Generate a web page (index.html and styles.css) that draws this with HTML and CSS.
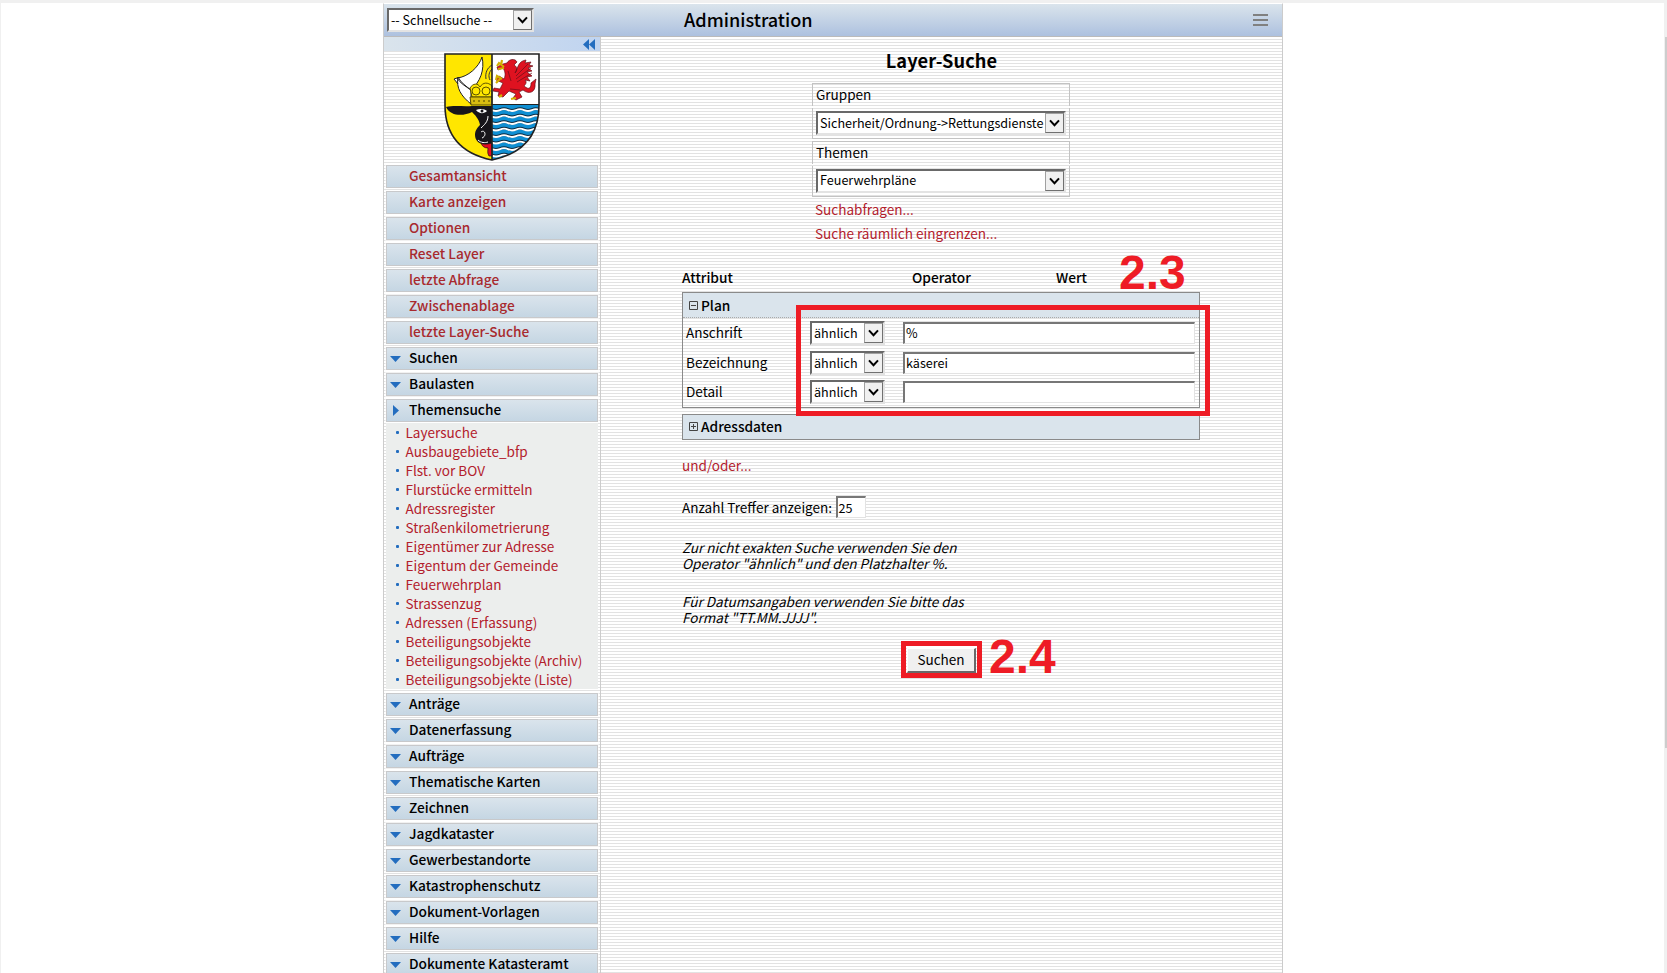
FILE: index.html
```html
<!DOCTYPE html>
<html lang="de">
<head>
<meta charset="utf-8">
<title>Administration</title>
<link rel="stylesheet" href="styles.css">
</head>
<body>
<div class="app">
  <header class="top">
    <div class="select quick"><span>-- Schnellsuche --</span><i><svg viewBox="0 0 18 20"><path d="M4 7 9 12.500 14 7"/></svg></i></div>
    <h1>Administration</h1>
    <div class="burger"><b></b><b></b><b></b></div>
  </header>
  <div class="cols">
    <aside class="side">
      <div class="strip"><svg viewBox="0 0 12 11"><path d="M6 0v11L0 5.500zM12 0v11L6 5.500z"/></svg></div>
      <svg class="crest" viewBox="0 0 96 108">
        <defs><clipPath id="shield"><path d="M1 1H95V52C95 84 77 101 48 107 19 101 1 84 1 52Z"/></clipPath></defs>
        <g clip-path="url(#shield)">
          <path fill="#ffe600" d="M0 0h48v108H0z"/>
          <path fill="#fff" d="M48 0h48v51H48z"/>
          <path fill="#0f8fd3" d="M48 51h48v57H48z"/>
          <path stroke="#222" d="M48 51.500h48"/>
          <g fill="none" stroke="#0b2a40" stroke-width="2.600">
            <path id="w" d="M48 56.500q4 1.800 8 0 4-1.800 8 0 4 1.800 8 0 4-1.800 8 0 4 1.800 8 0 4-1.800 8 0"/>
            <use href="#w" y="6.500"/><use href="#w" y="13"/><use href="#w" y="19.500"/><use href="#w" y="26"/><use href="#w" y="32.500"/><use href="#w" y="39"/><use href="#w" y="45.500"/>
          </g>
          <g fill="none" stroke="#fff" stroke-width="1.800">
            <path id="v" d="M48 57.100q4 1.800 8 0 4-1.800 8 0 4 1.800 8 0 4-1.800 8 0 4 1.800 8 0 4-1.800 8 0"/>
            <use href="#v" y="6.500"/><use href="#v" y="13"/><use href="#v" y="19.500"/><use href="#v" y="26"/><use href="#v" y="32.500"/><use href="#v" y="39"/><use href="#v" y="45.500"/>
          </g>
          <path fill="#fff" stroke="#222" d="M27 51C17 43 12 35 14 24c3 6 8 9 13 13v14zM13 25C24 24 35 14 38 4c3 13-2 25-11 33-6-4-11-7-14-12zM13 25l-3 1 4 5"/>
          <path fill="none" stroke="#333" d="M48 12c-5 3-7 8-6 14M48 16c-3 3-4 7-2 11"/>
          <path fill="#ffe600" stroke="#4a4100" stroke-width=".9" d="M28 44l-2-9c3-5 8-5 10-1 3-5 8-5 12-1v11z"/>
          <g fill="none" stroke="#4a4100" stroke-width=".9"><circle cx="32" cy="38" r="4"/><circle cx="42" cy="38" r="4"/></g>
          <path fill="#d9bd10" stroke="#4a4100" stroke-width=".9" d="M26 44h22v8H27z"/>
          <path stroke="#4a4100" stroke-dasharray="2 3" d="M29 48h18"/>
          <path fill="#17151a" d="M2 54c9-2 17 0 26-1h20v51l-4-13c-6 2-13-2-13-9 0-5 3-8 5-10-1-6-5-10-8-13-8 4-21 5-26-5z"/>
          <path fill="#fff" d="M32 57c4-2 9-1 11 1-3 3-8 3-11-1z"/><circle cx="38" cy="58" r="1.500" fill="#17151a"/>
          <path fill="none" stroke="#fff" d="M44 63c0 6-4 9-7 12M37 79c4-3 6 4 1 6M34 87c3 3 7 3 10 2"/>
          <path fill="#e30b22" stroke="#17151a" stroke-width=".7" d="M37 90c4 2 7 1 11 0v13h-3c-2-3-1-6-1-8-4 0-6-2-7-5z"/>
          <path fill="#df1220" stroke="#65101a" stroke-width=".7" d="M63 10c2-4 8-5 10-1l-3 3c4 2 3 6 1 8 3-5 3-12 11-13l-1 3 6-1-2 3 4 1-5 2 4 3-5 1 5 4-5 1 3 4-5-1c2 2 1 4-1 6 6 5 7 1 7-3l5-4-1 5c1 8-6 11-12 6l-4 2 3 5-6 3-3-2 3-4-7-3-6 6-5-1 1-4-6-1 1-3 6 1 3-6-7-3 3-4 5 3c2-4 1-8-1-11l-5 2-1-3 6-3z"/>
          <g fill="none" stroke="#d2b000" stroke-width="2.200"><path d="M60 14l-5-4-2 3m4-1 1-5M60 15l-6 1M58 26l-5-3-1 4m4-1-4 4M58 42l-3 2M72 45l-5 1"/></g>
          <path fill="none" stroke="#651018" stroke-width=".7" d="M72 23l12-12M72 26l15-11M73 29l15-9M64 18l3 10M66 36l10 1"/>
        </g>
        <path fill="none" stroke="#222" stroke-width="1.600" d="M1 1H95V52C95 84 77 101 48 107 19 101 1 84 1 52ZM48 1V107"/>
      </svg>
      <nav class="menu">
        <a class="item link">Gesamtansicht</a>
        <a class="item link">Karte anzeigen</a>
        <a class="item link">Optionen</a>
        <a class="item link">Reset Layer</a>
        <a class="item link">letzte Abfrage</a>
        <a class="item link">Zwischenablage</a>
        <a class="item link">letzte Layer-Suche</a>
        <div class="item down">Suchen</div>
        <div class="item down">Baulasten</div>
        <div class="item right">Themensuche</div>
        <ul class="sub">
          <li>Layersuche</li><li>Ausbaugebiete_bfp</li><li>Flst. vor BOV</li><li>Flurstücke ermitteln</li><li>Adressregister</li><li>Straßenkilometrierung</li><li>Eigentümer zur Adresse</li><li>Eigentum der Gemeinde</li><li>Feuerwehrplan</li><li>Strassenzug</li><li>Adressen (Erfassung)</li><li>Beteiligungsobjekte</li><li>Beteiligungsobjekte (Archiv)</li><li>Beteiligungsobjekte (Liste)</li>
        </ul>
        <div class="item down">Anträge</div>
        <div class="item down">Datenerfassung</div>
        <div class="item down">Aufträge</div>
        <div class="item down">Thematische Karten</div>
        <div class="item down">Zeichnen</div>
        <div class="item down">Jagdkataster</div>
        <div class="item down">Gewerbestandorte</div>
        <div class="item down">Katastrophenschutz</div>
        <div class="item down">Dokument-Vorlagen</div>
        <div class="item down">Hilfe</div>
        <div class="item down">Dokumente Katasteramt</div>
      </nav>
    </aside>
    <main class="main">
      <h2>Layer-Suche</h2>
      <div class="pick">
        <div class="cap">Gruppen</div>
        <div class="box"><div class="select"><span>Sicherheit/Ordnung-&gt;Rettungsdienste</span><i><svg viewBox="0 0 18 20"><path d="M4 7 9 12.500 14 7"/></svg></i></div></div>
        <div class="cap">Themen</div>
        <div class="box"><div class="select low"><span>Feuerwehrpläne</span><i><svg viewBox="0 0 18 20"><path d="M4 7 9 12.500 14 7"/></svg></i></div></div>
        <a>Suchabfragen...</a>
        <a>Suche räumlich eingrenzen...</a>
      </div>
      <div class="form">
        <div class="heads"><b>Attribut</b><b>Operator</b><b>Wert</b></div>
        <section class="group">
          <h3><svg viewBox="0 0 9 9"><path d="M.5.500h8v8h-8zM2 4.500h5"/></svg>Plan</h3>
          <div class="row"><label>Anschrift</label><div class="select"><span>ähnlich</span><i><svg viewBox="0 0 18 20"><path d="M4 7 9 12.500 14 7"/></svg></i></div><div class="input">%</div></div>
          <div class="row"><label>Bezeichnung</label><div class="select"><span>ähnlich</span><i><svg viewBox="0 0 18 20"><path d="M4 7 9 12.500 14 7"/></svg></i></div><div class="input">käserei</div></div>
          <div class="row"><label>Detail</label><div class="select"><span>ähnlich</span><i><svg viewBox="0 0 18 20"><path d="M4 7 9 12.500 14 7"/></svg></i></div><div class="input"></div></div>
          <div class="mark frame"></div>
          <div class="mark num">2.3</div>
        </section>
        <section class="group closed"><h3><svg viewBox="0 0 9 9"><path d="M.5.500h8v8h-8zM2 4.500h5M4.500 2v5"/></svg>Adressdaten</h3></section>
        <a class="andor">und/oder...</a>
        <div class="hits"><span>Anzahl Treffer anzeigen:</span><div class="input">25</div></div>
        <p>Zur nicht exakten Suche verwenden Sie den<br>Operator "ähnlich" und den Platzhalter %.</p>
        <p>Für Datumsangaben verwenden Sie bitte das<br>Format "TT.MM.JJJJ".</p>
        <div class="submit"><div class="btn">Suchen</div><div class="mark frame"></div><div class="mark num">2.4</div></div>
      </div>
    </main>
  </div>
</div>
<div class="scroll"><div class="thumb"></div></div>
</body>
</html>
```
FILE: styles.css
```css
* { box-sizing: border-box; }
html, body { height: 973px; overflow: hidden; }
body { margin: 0; background: #fff; border-top: 3px solid #f0f0f0; border-left: 1px solid #f0f0f0; font: 13.55px/19px "Noto Sans CJK SC", sans-serif; color: #000; position: relative; }
.app { width: 900px; height: 970px; margin-left: 382px; border: 1px solid #ccc; border-top-color: #fff; border-bottom: 0; background: repeating-linear-gradient(#fff 0 2px, #e2e2e2 2px 3px); overflow: hidden; }
.top { height: 33px; display: flex; align-items: center; background: linear-gradient(#dae4ec, #adc1df); border-bottom: 1px solid #bbb; padding: 0 14px 0 3px; }
h1 { margin: -2px auto 0 150px; font-size: 18.1px; font-weight: 500; }
.burger { width: 15px; height: 12px; margin-top: -1px; display: grid; align-content: space-between; }
.burger b { height: 2px; background: #808080; }
.select { height: 24px; display: flex; background: #fff; border: 2px solid #696969; border-right-color: #e3e3e3; border-bottom-color: #e3e3e3; font-size: 12.6px; line-height: 20px; }
.select span { flex: 1; padding-left: 2px; white-space: nowrap; overflow: hidden; }
.select i { width: 19px; flex: none; background: #f0f0f0; border: 1px solid #707070; border-top-color: #a0a0a0; border-left-color: #a0a0a0; }
.select svg { display: block; width: 17px; height: 18px; fill: none; stroke: #000; stroke-width: 2.200; }
.quick { width: 147px; margin-top: -1px; }
.low { line-height: 18px; }
.cols { display: flex; height: 936px; }
.side { width: 217px; border-right: 1px solid #ccc; flex: none; }
.strip { height: 14px; background: linear-gradient(90deg, #dae4ec, #c0d4f0); display: flex; justify-content: flex-end; padding: 2px 5px 0 0; }
.strip svg { width: 12px; height: 11px; fill: #236dbf; }
.crest { display: block; width: 96px; height: 108px; margin: 2px 0 4px 60px; }
.menu { padding: 0 2px; }
.item { display: flex; height: 23px; margin-bottom: 3px; border: 1px solid #c8c9cb; background: linear-gradient(#dae4ec, #c5d6e3); outline: 1px solid #fff8; font-weight: 500; font-size: 13.7px; line-height: 18px; padding-left: 3px; }
.item::before { content: ""; width: 11px; flex: none; margin: 8px 8px 0 0; }
.link, .sub, a { color: #a82a2e; }
.down::before { height: 6px; background: #236dbf; clip-path: polygon(0 0, 100% 0, 50% 100%); }
.right::before { height: 11px; width: 6px; margin: 5px 10px 0 3px; background: #236dbf; clip-path: polygon(0 0, 100% 50%, 0 100%); }
.sub { margin: -2px 0 4px; padding: 0; list-style: none; background: #eceeed; color: #b3202c; }
.sub li { height: 19px; line-height: 19px; display: flex; white-space: nowrap; }
.sub li::before { content: ""; width: 3px; height: 3px; flex: none; border-radius: 1px; background: #236dbf; margin: 8px 6.500px 0 10px; }
.main { flex: 1; position: relative; }
h2 { margin: 11px 0 0; height: 35px; line-height: 24px; text-align: center; font-size: 18.2px; font-weight: 600; letter-spacing: .1px; }
.pick { width: 258px; margin-left: 211px; display: flex; flex-direction: column; }
.cap { height: 23px; border: 1px solid #c3c3c3; border-bottom: 0; padding-left: 3px; line-height: 21px; margin-bottom: 2px; }
.box { height: 31px; border: 1px solid #c3c3c3; border-top: 0; padding: 3px; margin-bottom: 2px; }
.pick a { height: 24px; line-height: 20px; padding-left: 3px; color: #b3202c; }
.form { margin: 21px 0 0 81px; width: 518px; }
.heads { display: grid; grid-template-columns: 230px 144px 1fr; height: 24px; }
.heads b { font-weight: 500; font-size: 13.7px; }
.group { border: 1px solid #8a8a8a; height: 116px; position: relative; }
h3 { margin: 0; height: 25px; display: flex; align-items: center; gap: 3px; padding-left: 6px; background: #dae4ec; border-bottom: 1px dotted #aaa; font-size: 13.7px; font-weight: 500; }
h3 svg { width: 9px; height: 9px; fill: none; stroke: #444; }
.row { display: flex; height: 29.500px; padding: 3px 4px 0 3px; }
.row label { width: 124px; line-height: 23px; }
.row .select { width: 75px; margin-right: 18px; }
.input { height: 22px; margin-top: 1px; background: #fff; border: 1px solid #e3e3e3; border-top: 2px solid #777; border-left: 2px solid #777; padding-left: 1px; font-size: 12.6px; line-height: 17px; }
.row .input { flex: 1; }
.closed { height: 26px; margin-top: 6px; }
.closed h3 { height: 24px; border: 0; padding-bottom: 1px; }
.andor { display: block; margin-top: 16px; color: #b3202c; }
.hits { display: flex; margin-top: 20px; height: 24px; line-height: 25px; gap: 3.500px; }
.hits .input { width: 30px; }
.hits .input { line-height: 19px; }
p { margin: 20px 0 0; font-style: italic; line-height: 16px; }
p + p { margin-top: 22px; }
.submit { position: relative; width: 70px; margin: 23px 0 0 225px; }
.btn { width: 69px; height: 25px; background: #f0f0f0; border: 1px solid #fff; border-right: 2px solid #696969; border-bottom: 2px solid #696969; text-align: center; line-height: 21px; }
.mark { position: absolute; color: #ee1c25; }
.group .frame { left: 113px; top: 12px; width: 414px; height: 111px; border: 5px solid #ee1c25; z-index: 1; }
.submit .frame { left: -6px; top: -7px; width: 81px; height: 37px; border: 5px solid #ee1c25; }
.num { font: bold 48px/48px "Liberation Sans", Arial, sans-serif; }
.group .num { left: 436px; top: -44px; }
.submit .num { left: 82px; top: -15px; }
.scroll { position: absolute; right: 0; top: 0; width: 3px; height: 970px; background: #f0f0f0; padding: 34px 0 0 1px; }
.thumb { width: 2px; height: 711px; background: #cdcdcd; }
```
